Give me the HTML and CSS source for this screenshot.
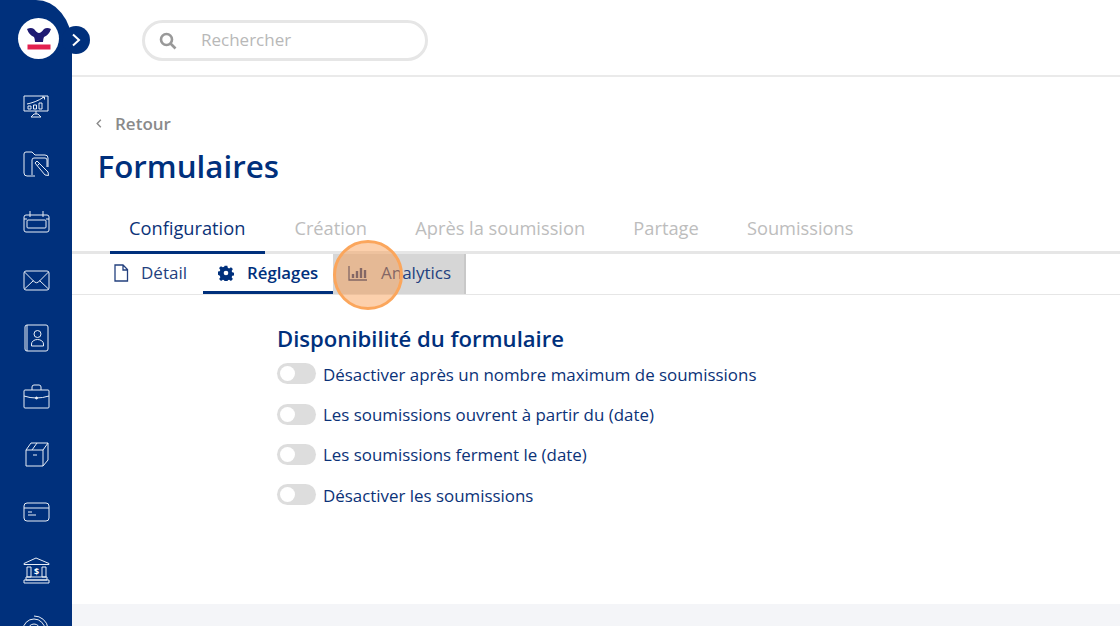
FILE: index.html
```html
<!DOCTYPE html>
<html lang="fr">
<head>
<meta charset="utf-8">
<title>Formulaires</title>
<link rel="stylesheet" href="styles.css">
</head>
<body>
<div class="app">
  <aside class="sidebar">
    <div class="logo">
      <svg viewBox="0 0 41 41" width="41" height="41">
        <path d="M9 11 Q13 9 16 11 Q19 15 21 15 Q23 15 26 11 Q29 9 33 11 Q31 17 26 19 Q25 21 25 24 L17 24 Q17 21 16 19 Q11 17 9 11Z" fill="#1f1a72"/>
        <rect x="9.500" y="26.500" width="23" height="5" fill="#e3204f"/>
      </svg>
    </div>
    <nav class="nav">
      <svg class="ico" viewBox="0 0 28 28"><path d="M2 4h24v15H2zM14 19v3M9 25l3-3h4l3 3M9 25h10"/><path d="M5 12c5-1 11-3 17-7M20 5h2.500v2.500M6 14h3v3H6zM11.500 13h3v4h-3zM17 11h3v6h-3z"/></svg>
      <svg class="ico" viewBox="0 0 28 28"><path d="M13 26H5a3 3 0 0 1-3-3V4a2 2 0 0 1 2-2h6l3 3h10a3 3 0 0 1 3 3v9"/><path d="M10 25V10a2 2 0 0 1 2-2h11a2 2 0 0 1 2 2v7"/><path d="M13 13l2-2 11 11 .5 3.500-3.500-.5z"/><path d="M15.500 15.500l2-2"/></svg>
      <svg class="ico" viewBox="0 0 28 28"><rect x="2" y="7" width="25" height="17" rx="2"/><rect x="5" y="12" width="19" height="8" rx="1"/><path d="M8 3v6M21 3v6M2 11h3M24 11h3"/></svg>
      <svg class="ico" viewBox="0 0 28 28"><rect x="2" y="5" width="25" height="19" rx="2"/><path d="M2.500 6l10 10q2 1.500 4 0l10-10M2.500 23l9-8.500M26.500 23l-9-8.500"/></svg>
      <svg class="ico" viewBox="0 0 28 28"><rect x="3" y="1" width="23" height="26" rx="2"/><path d="M5 1v26"/><circle cx="15.500" cy="10" r="3.500"/><path d="M9.500 22v-2a6 4.500 0 0 1 12 0v2z"/></svg>
      <svg class="ico" viewBox="0 0 28 28"><rect x="2" y="8" width="25" height="18" rx="1"/><path d="M10 8V5a2 2 0 0 1 2-2h5a2 2 0 0 1 2 2v3M2 14q12 4 25 0"/><circle cx="14.500" cy="16" r="1" fill="#fff"/></svg>
      <svg class="ico" viewBox="0 0 28 28"><path d="M4 10h17v16H4zM4 10l5-7h17l-5 7M21 26l5-6V3M11 15h4M15 3l-5 7"/></svg>
      <svg class="ico" viewBox="0 0 28 28"><rect x="2" y="5" width="25" height="18" rx="3"/><path d="M2 10h25M6 14h4M6 17h8"/></svg>
      <svg class="ico" viewBox="0 0 28 28"><path d="M14 2L2 7.500v1h25v-1zM5 11h4v10H5zM20 11h4v10h-4zM4 21h21v3H4zM2 24h25v3H2z"/><text x="14.500" y="19" class="ico-text">$</text></svg>
      <svg class="ico" viewBox="0 0 28 28"><circle cx="12" cy="16" r="11"/><circle cx="12" cy="16" r="6"/><path d="M12 2a14 14 0 0 1 14 12"/></svg>
    </nav>
  </aside>
  <button class="expand" type="button" aria-label="Ouvrir">
    <svg viewBox="0 0 12 14" width="12" height="14"><path d="M3 1.500L9 7l-6 5.500"/></svg>
  </button>
  <div class="main">
    <header class="topbar">
      <div class="search">
        <svg class="search-ico" viewBox="0 0 18 18" width="18" height="18"><circle cx="7.500" cy="7.500" r="5.500"/><path d="M11.500 11.500l5 5"/></svg>
        <span class="search-text">Rechercher</span>
      </div>
    </header>
    <section class="page">
      <a class="back"><svg viewBox="0 0 8 12" width="8" height="11"><path d="M6 2L2 6l4 4"/></svg><span>Retour</span></a>
      <h1 class="title">Formulaires</h1>
      <div class="tabs">
        <span class="tab active">Configuration</span>
        <span class="tab">Création</span>
        <span class="tab">Après la soumission</span>
        <span class="tab">Partage</span>
        <span class="tab">Soumissions</span>
      </div>
      <div class="subtabs">
        <span class="subtab detail">
          <svg viewBox="0 0 16 18" width="16" height="18" class="sub-ico"><path d="M2 1h8l4.500 4.500V17H2zM10 1v5h4.500"/></svg>Détail
        </span>
        <span class="subtab on">
          <svg viewBox="0 0 24 24" width="16" height="16" class="gear"><path d="M10 1h4l.7 3.300 1.900.8 2.900-1.800 2.800 2.800-1.800 2.900.8 1.900 3.300.7v4l-3.300.7-.8 1.900 1.800 2.900-2.800 2.800-2.900-1.800-1.900.8-.7 3.300h-4l-.7-3.300-1.900-.8-2.900 1.800-2.800-2.800 1.800-2.900-.8-1.900L-.7 14v-4l3.300-.7.8-1.900-1.800-2.900 2.800-2.800 2.900 1.800 1.900-.8zM12 8.500a3.500 3.500 0 1 0 0 7 3.500 3.500 0 0 0 0-7z" fill-rule="evenodd"/></svg>Réglages
        </span>
        <span class="subtab shaded">
          <svg viewBox="0 0 20 16" width="20" height="16" class="sub-ico bars"><path d="M1 1v14h18"/><path class="thick" d="M5 9v4M9 6v7M13 3v10M17 5v8"/></svg>Analytics
        </span>
        <span class="spot"></span>
      </div>
      <div class="form">
        <h2 class="form-title">Disponibilité du formulaire</h2>
        <label class="row"><span class="switch"></span><span>Désactiver après un nombre maximum de soumissions</span></label>
        <label class="row"><span class="switch"></span><span>Les soumissions ouvrent à partir du (date)</span></label>
        <label class="row"><span class="switch"></span><span>Les soumissions ferment le (date)</span></label>
        <label class="row"><span class="switch"></span><span>Désactiver les soumissions</span></label>
      </div>
    </section>
    <div class="footer"></div>
  </div>
</div>
</body>
</html>
```
FILE: styles.css
```css
* { box-sizing: border-box; }
html, body { margin: 0; height: 100%; overflow: hidden; background: #fff; }
body { font-family: "Open Sans", "Noto Sans", sans-serif; color: #0b2c6f; }
.app { display: flex; height: 626px; position: relative; overflow: hidden; }
.sidebar { width: 72px; flex: none; height: 626px; overflow: hidden; background: #00307c; border-top-right-radius: 36px 44px; padding-top: 18px; display: flex; flex-direction: column; align-items: center; z-index: 2; }
.logo { width: 41px; height: 41px; margin-left: 4px; border-radius: 50%; background: #fff; flex: none; }
.logo svg { display: block; }
.nav { margin-top: 33px; display: flex; flex-direction: column; gap: 30px; }
.ico { width: 28px; height: 28px; flex: none; fill: none; stroke: #e9eef6; stroke-width: 1; display: block; }
.ico-text { font: 700 9px "Open Sans", sans-serif; fill: #fff; stroke: none; text-anchor: middle; }
.expand { position: absolute; left: 62px; top: 26px; width: 28px; height: 28px; padding: 0; border: 0; border-radius: 50%; background: #00307c; z-index: 3; display: flex; align-items: center; justify-content: center; }
.expand svg { fill: none; stroke: #fff; stroke-width: 2; }
.main { flex: 1; min-width: 0; display: flex; flex-direction: column; }
.topbar { height: 77px; flex: none; border-bottom: 2px solid #eaeaea; padding: 20px 0 0 70px; }
.search { width: 286px; height: 41px; border: 3px solid #e6e6e6; border-radius: 21px; display: flex; align-items: center; padding-left: 14px; }
.search-ico { fill: none; stroke: #999; stroke-width: 2.600; flex: none; }
.search-text { margin-left: 24px; font-size: 17px; line-height: 22px; margin-top: -2px; color: #b8b8b8; }
.page { flex: 1; min-height: 0; }
.back { display: flex; align-items: center; margin: 34px 0 0 23px; height: 24px; color: #8a8a8a; font-size: 17px; font-weight: 600; }
.back svg { fill: none; stroke: #8a8a8a; stroke-width: 1.500; }
.back span { margin-left: 12px; }
.title { margin: 7px 0 0 25.500px; height: 48px; font-size: 31.300px; line-height: 48px; font-weight: 600; color: #00307c; }
.tabs { margin-top: 18px; height: 46px; padding-left: 38px; display: flex; border-bottom: 3px solid #e6e6e6; }
.tab { padding: 0 19px; margin-right: 10.200px; height: 46px; line-height: 39px; font-size: 18.250px; color: #bdbdbd; white-space: nowrap; }
.tab.active { color: #0b3278; border-bottom: 3px solid #00307c; padding-right: 20px; margin-right: 10px; }
.subtabs { position: relative; height: 41px; display: flex; padding-left: 41px; border-bottom: 1px solid #e6e6e6; font-size: 17px; }
.subtab { height: 40px; padding-bottom: 3px; display: flex; align-items: center; white-space: nowrap; color: #23407e; }
.sub-ico { fill: none; stroke: #23407e; stroke-width: 1.300; }
.detail { width: 90px; gap: 12px; }
.on { width: 130px; padding: 0 0 0 15px; gap: 13px; font-size: 16.800px; color: #00307c; font-weight: 600; border-bottom: 3px solid #00307c; }
.gear { fill: #00307c; }
.shaded { width: 133px; padding-left: 15px; gap: 13px; background: #d6d6d6; border-right: 2px solid #c8c8c8; }
.bars { stroke-width: 1.300; }
.thick { stroke-width: 2.400; }
.spot { position: absolute; left: 261px; top: -14px; width: 70px; height: 70px; border-radius: 50%; border: 3px solid #fba65c; background: rgba(248, 150, 70, .45); }
.form { padding: 28px 0 0 205px; }
.form-title { margin: 0; font-size: 22.100px; line-height: 31px; font-weight: 600; color: #00307c; }
.row { display: flex; align-items: center; height: 40.400px; gap: 7px; font-size: 16.900px; color: #0b3278; }
.switch { position: relative; width: 39px; height: 21px; border-radius: 11px; background: #dddddd; flex: none; margin-top: -1px; }
.switch::after { content: ""; position: absolute; left: 3px; top: 3px; width: 15px; height: 15px; border-radius: 50%; background: #fff; }
.footer { height: 22px; flex: none; background: #f4f5f8; }
```
